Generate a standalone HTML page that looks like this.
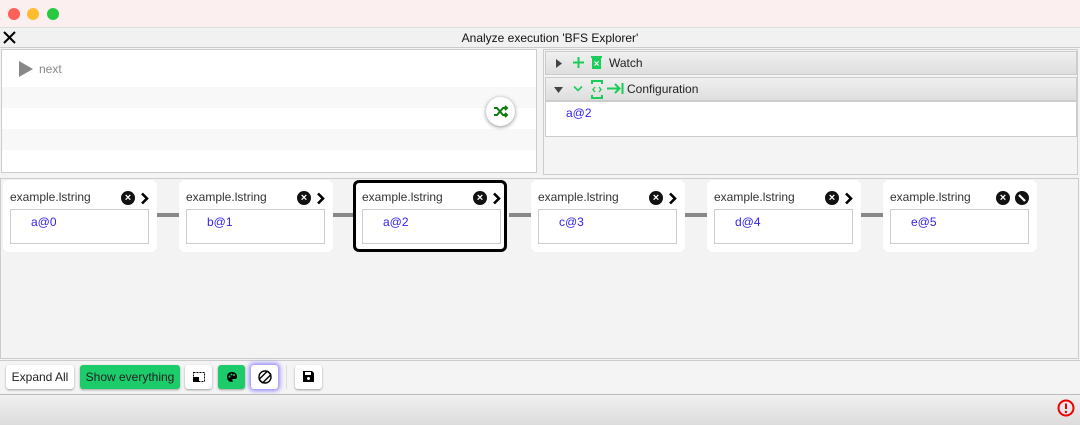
<!DOCTYPE html>
<html><head><meta charset="utf-8"><style>
*{box-sizing:border-box;margin:0;padding:0}
body{width:1080px;height:425px;overflow:hidden;background:#f3f3f3;font-family:"Liberation Sans",sans-serif;font-size:12px;color:#222;position:relative}
.abs{position:absolute}
.title{left:0;top:0;width:1080px;height:28px;background:#fcefef;border-bottom:1px solid #ddd}
.dot{top:8px;width:12px;height:12px;border-radius:50%}
.tb{left:0;top:29px;width:1080px;height:19px;background:#f1f1f1;border-bottom:1px solid #ccc}
.lp{left:1px;top:49px;width:536px;height:124px;background:#fff;border:1px solid #ccc}
.stripe{left:0;width:534px;height:21px;background:#f8f8f8}
.rp{left:543px;top:49px;width:535px;height:126px;background:#f4f4f4;border:1px solid #ccc}
.hdr{left:1px;width:532px;height:24px;background:linear-gradient(#f0f0f0,#dedede);border:1px solid #ccc;font-size:12px;line-height:23px}
.graph{left:0;top:178px;width:1079px;height:181px;background:#f3f3f3;border:1px solid #ccc}
.card{top:180px;width:154px;height:72px;background:#fff;border-radius:6px}
.card.sel{border:3px solid #000}
.card .t{position:absolute;left:7px;top:10px;font-size:12px;color:#333}
.card .box{position:absolute;left:7px;top:29px;width:139px;height:35px;border:1px solid #ccc}
.card .v{position:absolute;left:20px;top:5px;color:#3322ee;font-size:12px}
.ic{position:absolute;top:11px;width:14px;height:14px;border-radius:50%;background:#111;color:#fff;font-size:11px;font-weight:bold;text-align:center;line-height:14px}
.conn{top:213px;width:22px;height:4px;background:#888}
.bb{left:0;top:360px;width:1080px;height:33px;background:#f4f4f4;border-top:1px solid #ccc}
.btn{top:365px;height:24px;background:#fff;border-radius:3px;box-shadow:0 1px 2px rgba(0,0,0,.35);font-size:12px;line-height:24px;text-align:center}
.status{left:0;top:394px;width:1080px;height:31px;background:linear-gradient(#f0f0f0,#dcdcdc);border-top:1px solid #bbb}
</style></head><body>
<div class="abs title"></div>
<div class="abs dot" style="left:8px;background:#fe5f57"></div>
<div class="abs dot" style="left:27px;background:#febc2e"></div>
<div class="abs dot" style="left:47px;background:#28c840"></div>
<div class="abs tb"></div>
<svg class="abs" style="left:3px;top:31px" width="13" height="13"><path d="M1 1L12 12M12 1L1 12" stroke="#000" stroke-width="2"/></svg>
<div class="abs" style="left:0;top:31px;width:1100px;text-align:center;font-size:12px;color:#111">Analyze execution 'BFS Explorer'</div>

<div class="abs lp">
<div class="abs stripe" style="top:37px"></div>
<div class="abs stripe" style="top:79px"></div>
<svg class="abs" style="left:16px;top:10px" width="16" height="18"><path d="M1 1L15 9L1 17Z" fill="#888"/></svg>
<div class="abs" style="left:37px;top:12px;color:#888;font-size:12px">next</div>
<div class="abs" style="left:484px;top:47px;width:29px;height:29px;border-radius:50%;background:#fff;box-shadow:0 1px 4px rgba(0,0,0,.45)">
<svg width="29" height="29"><g stroke="#127a12" stroke-width="2" fill="none"><path d="M8 11h3l6 7h4M8 18h3l6-7h4"/><path d="M19 9l2 2-2 2M19 16l2 2-2 2"/></g></svg></div>
</div>

<div class="abs rp">
<div class="abs hdr" style="top:1px">
<svg class="abs" style="left:9px;top:7px" width="8" height="9"><path d="M1 0L7 4.5L1 9Z" fill="#444"/></svg>
<svg class="abs" style="left:26px;top:4px" width="13" height="13"><path d="M6.5 1V12M1 6.5H12" stroke="#1ccc5a" stroke-width="2"/></svg>
<svg class="abs" style="left:45px;top:3px" width="11" height="15"><rect x="1" y="3" width="9" height="11" fill="#1ccc5a"/><rect x="0" y="1" width="11" height="2" fill="#1ccc5a"/><path d="M3.5 6.5l4 4M7.5 6.5l-4 4" stroke="#fff" stroke-width="1.2"/></svg>
<span class="abs" style="left:63px;top:0">Watch</span></div>
<div class="abs hdr" style="top:27px">
<svg class="abs" style="left:8px;top:8px" width="9" height="8"><path d="M0 1H9L4.5 7Z" fill="#444"/></svg>
<svg class="abs" style="left:27px;top:7px" width="10" height="8"><path d="M1 1.5L5 5.5L9 1.5" stroke="#1ccc5a" stroke-width="1.6" fill="none"/></svg>
<svg class="abs" style="left:45px;top:2px" width="12" height="19"><g stroke="#1ccc5a" stroke-width="2" fill="none"><path d="M1 4V1H11V4M1 15V18H11V15"/><path d="M4 7L2 9.5L4 12M8 7L10 9.5L8 12" stroke-width="1.4"/></g></svg>
<svg class="abs" style="left:61px;top:4px" width="17" height="13"><path d="M0 6.5H12M8 2L12.5 6.5L8 11M15.5 1V12" stroke="#1ccc5a" stroke-width="2" fill="none"/></svg>
<span class="abs" style="left:81px;top:0">Configuration</span></div>
<div class="abs" style="left:1px;top:51px;width:532px;height:36px;background:#fff;border:1px solid #ccc"><span class="abs" style="left:20px;top:4px;color:#3322ee">a@2</span></div>
</div>

<div class="abs graph"></div>
<div class="abs conn" style="left:157px"></div>
<div class="abs conn" style="left:333px"></div>
<div class="abs conn" style="left:509px"></div>
<div class="abs conn" style="left:685px"></div>
<div class="abs conn" style="left:861px"></div>

<div class="abs card" style="left:3px"><div class="t">example.lstring</div><div class="ic" style="left:118px">×</div><svg class="abs" style="left:137px;top:12px" width="9" height="13"><path d="M2 1.5L7 6.5L2 11.5" stroke="#000" stroke-width="2.6" fill="none"/></svg><div class="box"><span class="v">a@0</span></div></div>
<div class="abs card" style="left:179px"><div class="t">example.lstring</div><div class="ic" style="left:118px">×</div><svg class="abs" style="left:137px;top:12px" width="9" height="13"><path d="M2 1.5L7 6.5L2 11.5" stroke="#000" stroke-width="2.6" fill="none"/></svg><div class="box"><span class="v">b@1</span></div></div>
<div class="abs card sel" style="left:353px"><div class="t" style="left:6px;top:7px">example.lstring</div><div class="ic" style="left:117px;top:8px">×</div><svg class="abs" style="left:136px;top:9px" width="9" height="13"><path d="M2 1.5L7 6.5L2 11.5" stroke="#000" stroke-width="2.6" fill="none"/></svg><div class="box" style="left:6px;top:26px;width:139px"><span class="v" style="left:20px">a@2</span></div></div>
<div class="abs card" style="left:531px"><div class="t">example.lstring</div><div class="ic" style="left:118px">×</div><svg class="abs" style="left:137px;top:12px" width="9" height="13"><path d="M2 1.5L7 6.5L2 11.5" stroke="#000" stroke-width="2.6" fill="none"/></svg><div class="box"><span class="v">c@3</span></div></div>
<div class="abs card" style="left:707px"><div class="t">example.lstring</div><div class="ic" style="left:118px">×</div><svg class="abs" style="left:137px;top:12px" width="9" height="13"><path d="M2 1.5L7 6.5L2 11.5" stroke="#000" stroke-width="2.6" fill="none"/></svg><div class="box"><span class="v">d@4</span></div></div>
<div class="abs card" style="left:883px"><div class="t">example.lstring</div><div class="ic" style="left:113px">×</div><svg class="abs" style="left:132px;top:11px" width="14" height="14"><circle cx="7" cy="7" r="7" fill="#111"/><path d="M4 4L10 10" stroke="#fff" stroke-width="2.2"/></svg><div class="box"><span class="v">e@5</span></div></div>

<div class="abs bb"></div>
<div class="abs btn" style="left:6px;width:68px">Expand All</div>
<div class="abs btn" style="left:80px;width:100px;background:#1ccc6a">Show everything</div>
<div class="abs btn" style="left:185px;width:27px"><svg style="margin-top:7px" width="12" height="10"><rect x="0.5" y="0.5" width="11" height="9" fill="none" stroke="#000" stroke-dasharray="2 1"/><rect x="0" y="5" width="6" height="5" fill="#000"/></svg></div>
<div class="abs btn" style="left:218px;width:27px;background:#1ccc6a"><svg style="margin-top:6px" width="12" height="12"><path d="M6 1C2 1 1 4 1 6c0 3 2 5 5 5 1 0 1-1 .5-1.5C6 9 6 8 7 8h2c1.5 0 2-1 2-2.5C11 3 9 1 6 1z" fill="#000"/><circle cx="3.5" cy="5.5" r="1" fill="#1ccc6a"/><circle cx="5.5" cy="3.5" r="1" fill="#1ccc6a"/><circle cx="8" cy="4" r="1" fill="#1ccc6a"/></svg></div>
<div class="abs btn" style="left:251px;width:27px;box-shadow:0 0 4px 2px #9a8cff"><svg style="margin-top:5px" width="14" height="14"><g fill="none" stroke="#000" stroke-width="1.4"><rect x="4.5" y="1" width="5" height="12" rx="1" transform="rotate(45 7 7)"/><circle cx="7" cy="7" r="6"/></g></svg></div>
<div class="abs" style="left:286px;top:365px;width:1px;height:24px;background:#ddd"></div>
<div class="abs btn" style="left:295px;width:27px"><svg style="margin-top:6px" width="11" height="11"><path d="M0 0H9L11 2V11H0Z" fill="#000"/><rect x="2" y="1" width="6" height="3" fill="#fff"/><circle cx="5.5" cy="7.5" r="1.5" fill="#fff"/></svg></div>
<div class="abs status"></div>
<svg class="abs" style="left:1057px;top:399px" width="18" height="18"><circle cx="9" cy="9" r="7.5" fill="none" stroke="#e00" stroke-width="2"/><path d="M9 4.5V10" stroke="#e00" stroke-width="2"/><circle cx="9" cy="13" r="1.2" fill="#e00"/></svg>
</body></html>
